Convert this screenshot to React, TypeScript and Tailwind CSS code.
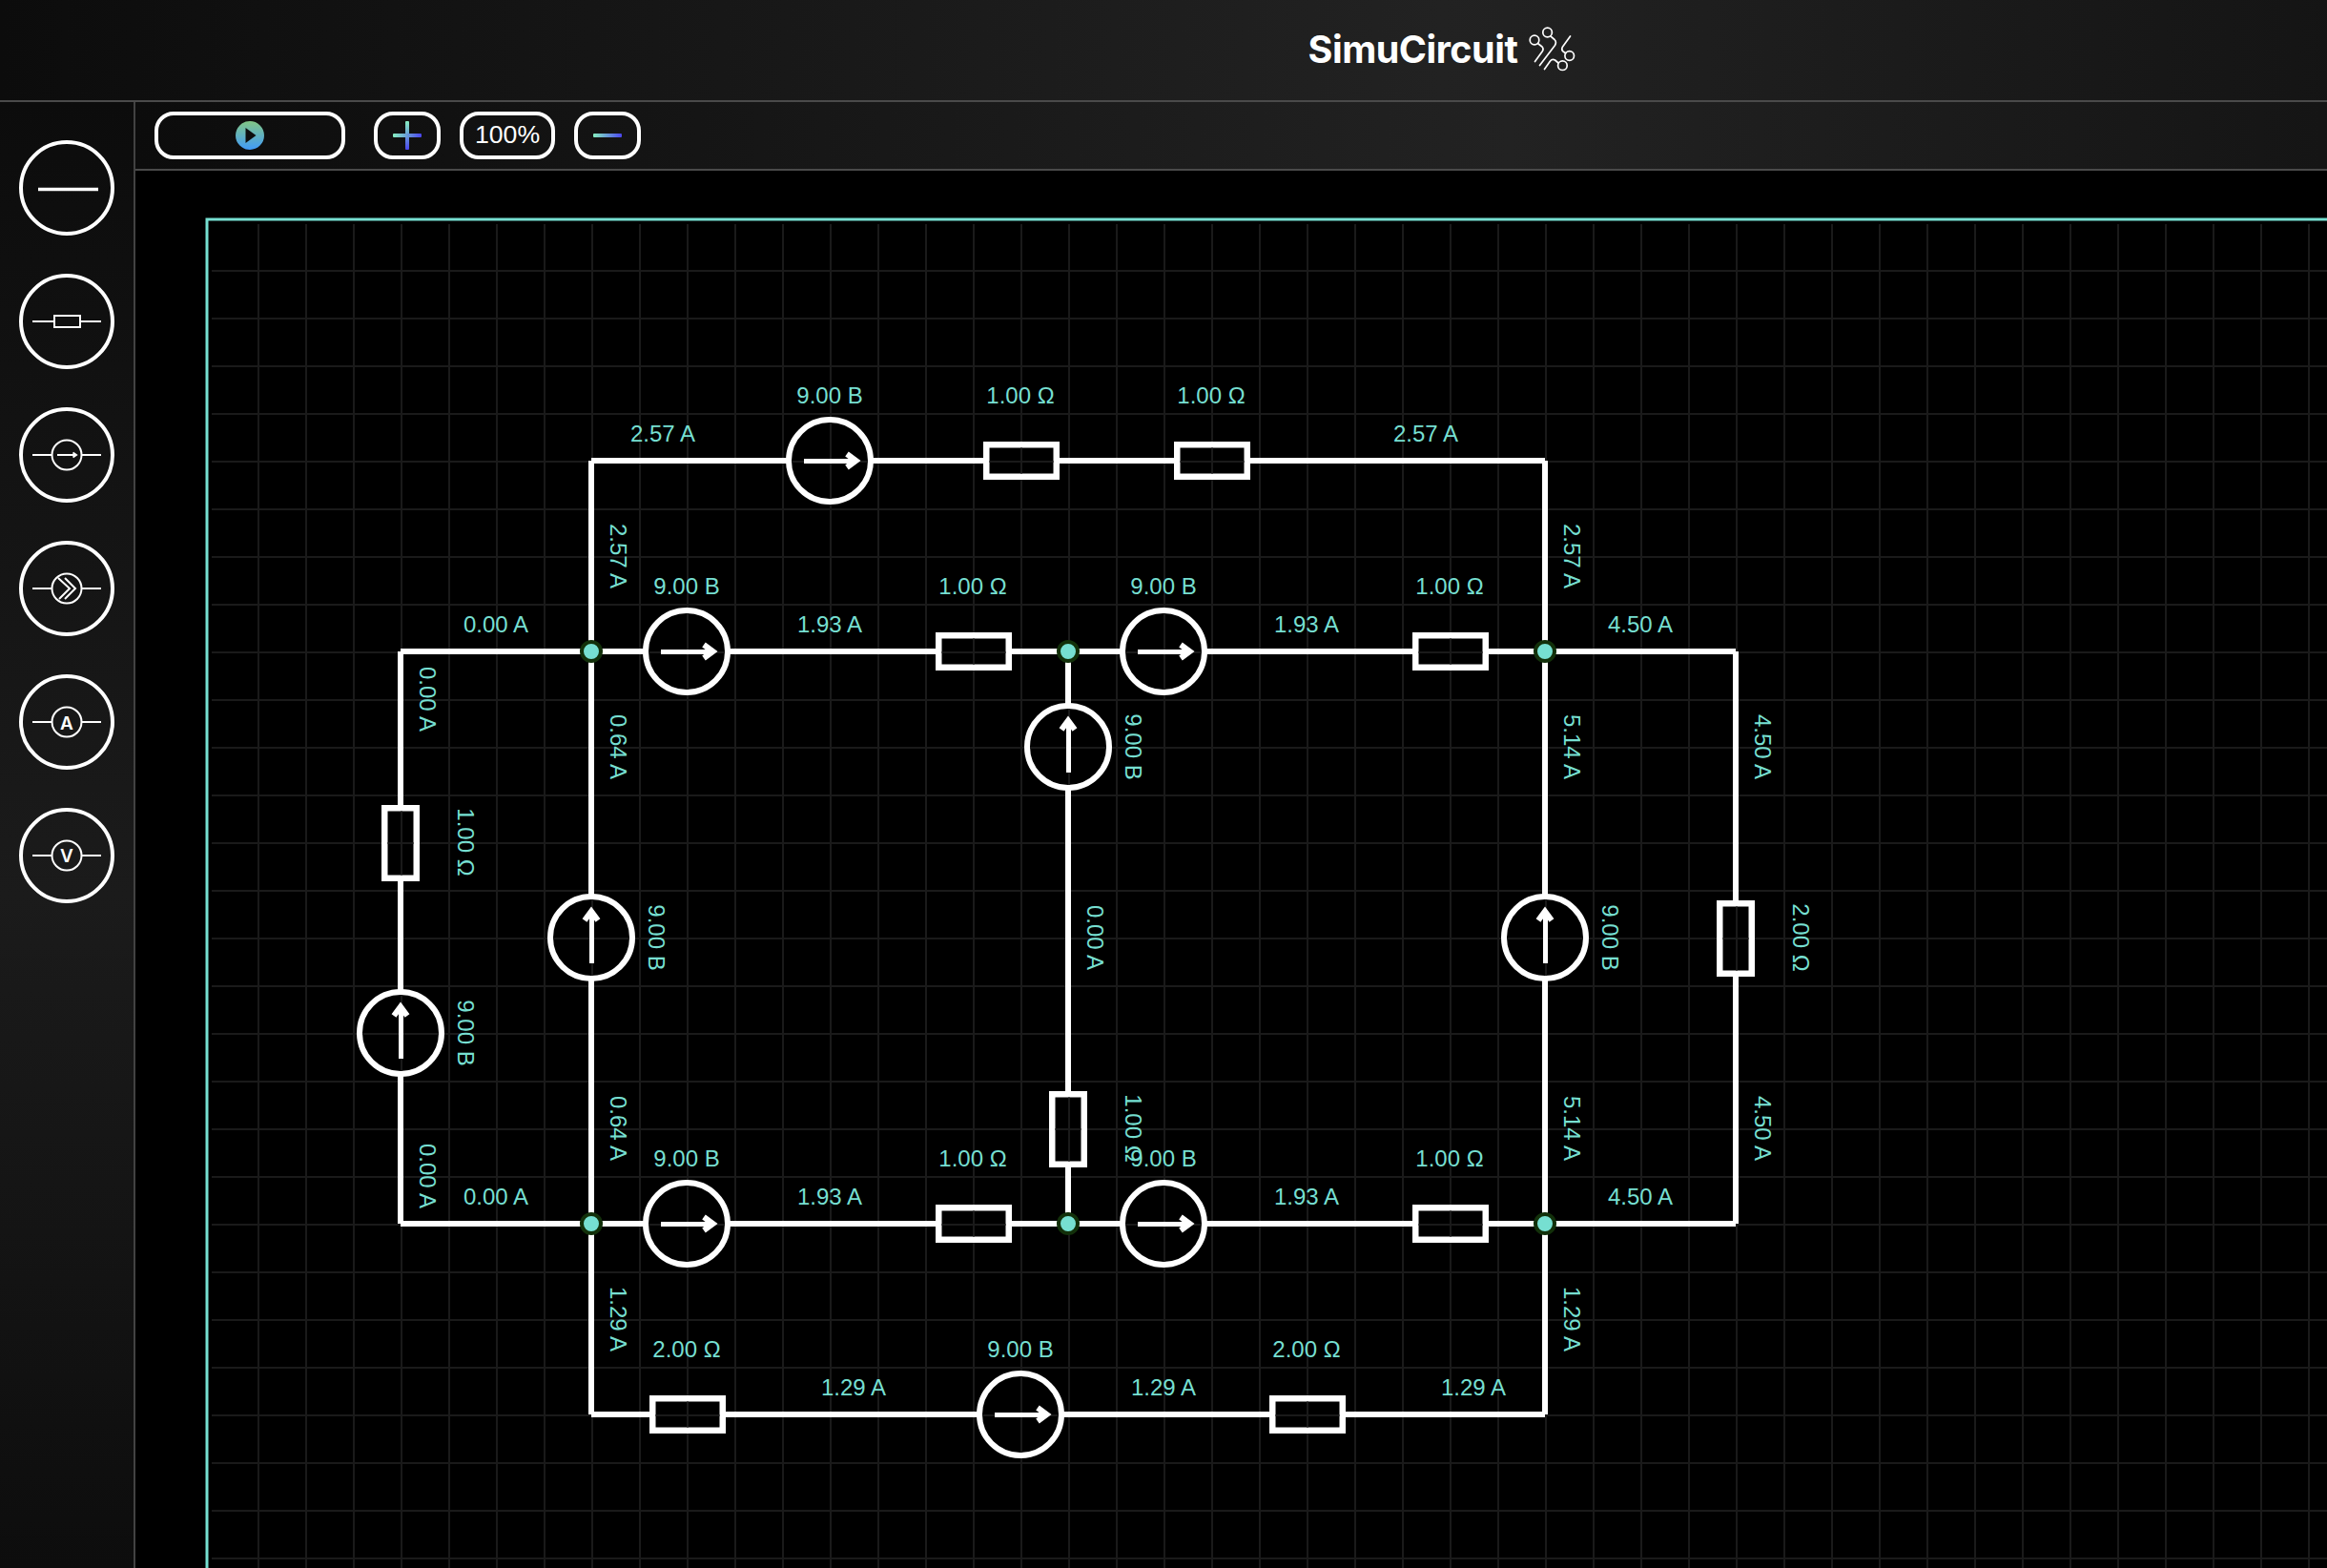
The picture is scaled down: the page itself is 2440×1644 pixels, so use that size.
import React from "react";

const TEAL = "#76dfd1";
const SANS = '"Liberation Sans", Arial, sans-serif';

type P = [number, number];

// Canvas coordinates are given in grid steps of 50px
const X = (u: number) => u * 50;

const wires: [number, number, number, number][] = [
  [8, 3, 28, 3], [8, 3, 8, 23], [28, 3, 28, 23], [8, 23, 28, 23],
  [4, 7, 32, 7], [4, 7, 4, 19], [32, 7, 32, 19], [4, 19, 32, 19], [18, 7, 18, 19],
];
const sources: [number, number, boolean][] = [
  [13, 3, false], [10, 7, false], [20, 7, false], [10, 19, false], [20, 19, false], [17, 23, false],
  [18, 9, true], [8, 13, true], [28, 13, true], [4, 15, true],
];
const resistors: [number, number, boolean][] = [
  [17, 3, false], [21, 3, false], [16, 7, false], [26, 7, false], [16, 19, false], [26, 19, false],
  [10, 23, false], [23, 23, false], [4, 11, true], [32, 13, true], [18, 17, true],
];
const nodes: P[] = [[8, 7], [18, 7], [28, 7], [8, 19], [18, 19], [28, 19]];

const hLabels: [number, number, string][] = [
  [13, 3, "9.00 B"], [17, 3, "1.00 Ω"], [21, 3, "1.00 Ω"],
  [10, 7, "9.00 B"], [16, 7, "1.00 Ω"], [20, 7, "9.00 B"], [26, 7, "1.00 Ω"],
  [10, 19, "9.00 B"], [16, 19, "1.00 Ω"], [20, 19, "9.00 B"], [26, 19, "1.00 Ω"],
  [10, 23, "2.00 Ω"], [17, 23, "9.00 B"], [23, 23, "2.00 Ω"],
];
const hCurrents: [number, number, string][] = [
  [9.5, 3, "2.57 A"], [25.5, 3, "2.57 A"],
  [6, 7, "0.00 A"], [13, 7, "1.93 A"], [23, 7, "1.93 A"], [30, 7, "4.50 A"],
  [6, 19, "0.00 A"], [13, 19, "1.93 A"], [23, 19, "1.93 A"], [30, 19, "4.50 A"],
  [13.5, 23, "1.29 A"], [20, 23, "1.29 A"], [26.5, 23, "1.29 A"],
];
const vLabels: [number, number, string][] = [
  [4, 11, "1.00 Ω"], [4, 15, "9.00 B"], [8, 13, "9.00 B"], [18, 9, "9.00 B"],
  [18, 17, "1.00 Ω"], [28, 13, "9.00 B"], [32, 13, "2.00 Ω"],
];
const vCurrents: [number, number, string][] = [
  [8, 5, "2.57 A"], [28, 5, "2.57 A"], [4, 8, "0.00 A"], [4, 18, "0.00 A"],
  [8, 9, "0.64 A"], [8, 17, "0.64 A"], [8, 21, "1.29 A"],
  [28, 9, "5.14 A"], [28, 17, "5.14 A"], [28, 21, "1.29 A"],
  [32, 9, "4.50 A"], [32, 17, "4.50 A"], [18, 13, "0.00 A"],
];

function Circuit() {
  return (
    <svg className="block" width="2225" height="1416" viewBox="215 228 2225 1416">
      <defs>
        <pattern id="grid" x="220" y="233" width="50" height="50" patternUnits="userSpaceOnUse">
          <path d="M0 1H50M1 0V50" stroke="#ffffff" strokeOpacity="0.1" strokeWidth="2" fill="none" shapeRendering="crispEdges" />
        </pattern>
      </defs>
      <path d="M2440 230H217V1644" stroke={TEAL} strokeWidth="3" fill="none" />
      <rect x="222" y="235" width="2218" height="1409" fill="url(#grid)" />
      <g transform="translate(220 333)" fontFamily={SANS} fontSize="24">
        <g stroke="#fff" strokeWidth="6" fill="none" strokeLinecap="butt">
          {wires.map(([a, b, c, d], i) => (
            <path key={i} d={a === c ? `M${X(a)} ${X(b)}V${X(d)}` : `M${X(a)} ${X(b)}H${X(c)}`} />
          ))}
        </g>
        {sources.map(([x, y, v], i) => (
          <g key={i} transform={`translate(${X(x)} ${X(y)})`} stroke="#fff" fill="none">
            <circle r="43" strokeWidth="6" fill="#000" />
            <path d="M-40 1H40M1 -40V40" stroke="#1a1a1a" strokeWidth="2" />
            <g transform={v ? "rotate(-90)" : undefined}>
              <path d="M-27 .5H28" strokeWidth="5" />
              <path d="M18 -7L27.500 0L18 7" strokeWidth="6" />
            </g>
          </g>
        ))}
        {resistors.map(([x, y, v], i) => (
          <g key={i} transform={`translate(${X(x)} ${X(y)})${v ? " rotate(90)" : ""}`}>
            <rect x="-35.75" y="-16.75" width="73.5" height="33.5" stroke="#fff" strokeWidth="6.5" fill="#000" />
            <path d={v ? "M-32.500 -1H34.500M1 -13.500V13.500" : "M-32.500 1H34.500M1 -13.500V13.500"} stroke="#1a1a1a" strokeWidth="2" />
          </g>
        ))}
        {nodes.map(([x, y], i) => (
          <circle key={i} cx={X(x)} cy={X(y)} r="10" fill={TEAL} stroke="#12300a" strokeWidth="4" />
        ))}
        <g fill={TEAL} textAnchor="middle">
          {hLabels.map(([x, y, t], i) => <text key={i} x={X(x)} y={X(y) - 60}>{t}</text>)}
          {hCurrents.map(([x, y, t], i) => <text key={i} x={X(x)} y={X(y) - 20}>{t}</text>)}
          {vLabels.map(([x, y, t], i) => <text key={i} transform={`translate(${X(x) + 60} ${X(y)}) rotate(90)`}>{t}</text>)}
          {vCurrents.map(([x, y, t], i) => <text key={i} transform={`translate(${X(x) + 20} ${X(y)}) rotate(90)`}>{t}</text>)}
        </g>
      </g>
    </svg>
  );
}

function Tool({ children }: { children: React.ReactNode }) {
  return (
    <button className="size-[100px] shrink-0 rounded-full border-4 border-white">
      <svg width="92" height="92" viewBox="-46 -46 92 92" fill="none" stroke="#fff" strokeWidth="2">{children}</svg>
    </button>
  );
}

const Leads = () => <path d="M-36 0H-16M16 0H36" />;

function Logo() {
  return (
    <svg width="52" height="52" viewBox="1602 25 52 52" fill="none" stroke="#fff" strokeWidth="1.7" strokeLinecap="round" strokeLinejoin="round">
      <circle cx="1609" cy="41" r="4.8" />
      <circle cx="1622.600" cy="33" r="4.8" />
      <circle cx="1645.700" cy="57.500" r="4.8" />
      <circle cx="1638.400" cy="67.700" r="4.8" />
      <path d="M1612.500 44.500L1617 48Q1618.800 49.800 1617.500 52.500L1609.500 63.500M1625.800 36.800L1630 40.500Q1632.500 43 1630.500 46.500L1614.500 67.500M1646.500 37L1638.200 48.500Q1637 51 1639 53L1641.800 54.800M1619.500 71.500L1625.500 63Q1627.500 60.500 1630.500 62L1634 65" />
    </svg>
  );
}

export default function App() {
  return (
    <div className="flex h-[1644px] w-[2440px] flex-col overflow-hidden bg-black font-['Liberation_Sans',Arial,sans-serif] text-white">
      <header className="h-[107px] w-[3024px] shrink-0 border-b-2 border-[#4a4a4a] bg-[linear-gradient(90deg,#0c0c0c,#222_50%,#0c0c0c)]">
        <div className="flex h-[104px] items-center justify-center pl-[2px]">
          <h1 className="pt-[2px] font-[Inter] text-[39.5px] font-bold tracking-[-0.5px]">SimuCircuit</h1>
          <div className="ml-[11px]"><Logo /></div>
        </div>
      </header>
      <div className="flex min-h-0 flex-1">
        <aside className="flex w-[142px] shrink-0 flex-col items-center gap-10 border-r-2 border-[#424242] bg-[linear-gradient(180deg,#0c0c0c,#1b1b1b_54%,#0d0d0d)] pt-10">
          <Tool><path d="M-30 1.500H33" strokeWidth="3.500" /></Tool>
          <Tool><path d="M-36 0H-13M14 0H36" /><rect x="-13" y="-6" width="27" height="12" /></Tool>
          <Tool><Leads /><circle r="15.500" /><path d="M-10 0H9M6.500 -2.500L10 0L6.500 2.500" /></Tool>
          <Tool><Leads /><circle r="15.500" /><path d="M-9 -11L3 0L-8 11M-2 -11L9 0L-2 11" /></Tool>
          <Tool><Leads /><circle r="15.500" /><text y="7.5" textAnchor="middle" fontFamily="Inter" fontWeight="600" fontSize="19" fill="#fff" stroke="none">A</text></Tool>
          <Tool><Leads /><circle r="15.500" /><text y="7" textAnchor="middle" fontFamily="Inter" fontWeight="600" fontSize="19" fill="#fff" stroke="none">V</text></Tool>
        </aside>
        <main className="flex min-w-0 flex-1 flex-col">
          <div className="flex h-[72px] w-[2882px] shrink-0 items-start border-b-2 border-[#4a4a4a] bg-[linear-gradient(90deg,#0c0c0c,#222_50%,#0c0c0c)] pl-5 pt-[10px]">
            <button className="flex h-[50px] w-[200px] items-center justify-center rounded-[20px] border-4 border-white">
              <svg width="30" height="30" viewBox="0 0 30 30">
                <defs><linearGradient id="play" x2="0" y2="1"><stop stopColor="#82c785" /><stop offset="1" stopColor="#419bf9" /></linearGradient></defs>
                <path fillRule="evenodd" fill="url(#play)" d="M15 0a15 15 0 1 0 0 30a15 15 0 1 0 0-30ZM10.500 7L21.500 15L10.500 23Z" />
              </svg>
            </button>
            <button className="ml-[30px] flex h-[50px] w-[70px] items-center justify-center rounded-[20px] border-4 border-white">
              <svg width="30" height="30" viewBox="0 0 30 30">
                <defs>
                  <linearGradient id="gh"><stop stopColor="#86efc0" /><stop offset="1" stopColor="#4a45ee" /></linearGradient>
                  <linearGradient id="gv" x2="0" y2="1"><stop stopColor="#86efc0" /><stop offset="1" stopColor="#4a45ee" /></linearGradient>
                </defs>
                <rect x="13" width="4" height="30" rx="1" fill="url(#gv)" />
                <rect y="13" width="30" height="4" rx="1" fill="url(#gh)" />
              </svg>
            </button>
            <div className="ml-5 flex h-[50px] w-[100px] items-center justify-center rounded-[20px] border-4 border-white pb-[2px] text-[26.67px]">100%</div>
            <button className="ml-5 flex h-[50px] w-[70px] items-center justify-center rounded-[20px] border-4 border-white">
              <svg width="30" height="30" viewBox="0 0 30 30"><rect y="13" width="30" height="4" rx="1" fill="url(#gh)" /></svg>
            </button>
          </div>
          <div className="min-h-0 flex-1 pl-[73px] pt-[49px]">
            <Circuit />
          </div>
        </main>
      </div>
    </div>
  );
}
